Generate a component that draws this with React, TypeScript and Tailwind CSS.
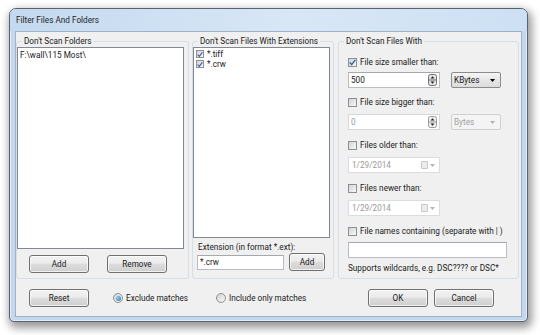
import type { ReactNode } from "react";

const Btn = ({ label, w }: { label: string; w: string }) => (
  <div
    className={`${w} h-[18px] flex items-center justify-center rounded-[3px] border border-[#707070] bg-[linear-gradient(#f2f2f2,#ebebeb_45%,#dddddd_50%,#cfcfcf)] shadow-[inset_0_0_0_1px_rgba(255,255,255,0.7)]`}
  >
    {label}
  </div>
);

const Check = ({ checked, size }: { checked?: boolean; size: string }) => (
  <span
    className={`${size} shrink-0 flex items-center justify-center border border-[#8e8f8f] bg-[linear-gradient(135deg,#d2d4d8,#f7f7f7)]`}
  >
    {checked && (
      <svg width="7" height="7" viewBox="0 0 7 7">
        <path d="M0.8 3.6 L2.7 5.6 L6.3 0.9" fill="none" stroke="#3c5fa8" strokeWidth="1.4" />
      </svg>
    )}
  </span>
);

const Radio = ({ on }: { on?: boolean }) => (
  <span className="w-[10px] h-[10px] shrink-0 rounded-full border border-[#8e8f8f] bg-[linear-gradient(135deg,#d0d2d6,#f8f8f8)] flex items-center justify-center">
    {on && (
      <span className="w-[5px] h-[5px] rounded-full bg-[radial-gradient(circle_at_35%_35%,#8fd0f5,#1f6bb0)]" />
    )}
  </span>
);

const Spin = ({ dim }: { dim?: boolean }) => (
  <svg width="9" height="12" viewBox="0 0 9 12" className="mr-[2px]">
    <rect x="0.5" y="0.5" width="8" height="11" rx="2" fill={dim ? "#f0f0f0" : "#e6e6e6"} stroke={dim ? "#9a9a9a" : "#6f6f6f"} />
    <line x1="1" y1="6" x2="8" y2="6" stroke={dim ? "#9a9a9a" : "#6f6f6f"} />
    <path d="M2.5 4.5 L4.5 2.3 L6.5 4.5 Z" fill="#202020" />
    <path d="M2.5 7.5 L4.5 9.7 L6.5 7.5 Z" fill="#202020" />
  </svg>
);

const Row = ({ children, mt }: { children: ReactNode; mt: string }) => (
  <div className={`${mt} h-[10px] flex items-center gap-[3px]`}>{children}</div>
);

const DateBox = ({ mt }: { mt: string }) => (
  <div className={`${mt} w-[92px] h-[16px] flex items-center justify-between border border-[#d9dde2] bg-white pl-[3px] pr-[4px] text-[#9a9a9a]`}>
    <span>1/29/2014</span>
    <span className="flex items-center gap-[2px]">
      <span className="w-[7px] h-[8px] rounded-[1px] border border-[#c8c8c8] bg-[#ececec]" />
      <svg width="5" height="3" viewBox="0 0 5 3">
        <path d="M0 0 L5 0 L2.5 3 Z" fill="#b5b5b5" />
      </svg>
    </span>
  </div>
);

const Group = ({ title, w, children }: { title: string; w: string; children: ReactNode }) => (
  <fieldset className={`${w} h-[243px] shrink-0 rounded-[3px] border border-[#d5dfe5]`}>
    <legend className="ml-[5px] px-[2px] h-[10px] leading-[10px]">{title}</legend>
    {children}
  </fieldset>
);

export default function App() {
  return (
    <div className="w-[540px] h-[335px] bg-white overflow-hidden pt-[8px] pl-[9px] font-['Roboto',Arial,sans-serif] text-[8.2px] leading-[10px] text-[#1a1a1a]">
      <div className="w-[519px] h-[314px] flex flex-col rounded-t-[7px] rounded-b-[5px] border border-[#58636f] bg-[#c3d8ee] shadow-[inset_0_0_0_1px_rgba(255,255,255,0.55),2px_4px_9px_2px_rgba(0,0,0,0.4)]">
        <div className="h-[22px] shrink-0 flex items-center pl-[6px] rounded-t-[6px] bg-[linear-gradient(90deg,#c4d9ef,#d8e7f6_55%,#cde0f3)] text-[#1e1e1e]">
          Filter Files And Folders
        </div>
        <div className="mx-[5px] h-[286px] border border-[#9fb3c8] bg-[#f0f0f0] flex flex-col">
          <div className="mt-[4px] flex">
            <Group title="Don't Scan Folders" w="w-[173px]">
              <div className="mt-[1px] w-[167px] h-[202px] border border-[#828790] bg-white pt-[2px] pl-[2px]">
                F:\wall\115 Most\
              </div>
              <div className="mt-[6px] flex pl-[12px] gap-[18px]">
                <Btn label="Add" w="w-[60px]" />
                <Btn label="Remove" w="w-[60px]" />
              </div>
            </Group>
            <div className="w-[3px] shrink-0" />
            <Group title="Don't Scan Files With Extensions" w="w-[142px]">
              <div className="mt-[1px] w-[137px] h-[191px] border border-[#828790] bg-white pt-[1px] pl-[2px]">
                {["*.tiff", "*.crw"].map((e) => (
                  <div key={e} className="h-[10px] flex items-center gap-[3px]">
                    <Check checked size="w-[8px] h-[8px]" />
                    <span>{e}</span>
                  </div>
                ))}
              </div>
              <div className="mt-[4px] pl-[5px] h-[10px]">Extension (in format *.ext):</div>
              <div className="mt-[1px] flex items-center pl-[4px] gap-[5px]">
                <div className="w-[87px] h-[15px] flex items-center border border-[#b8bdc3] border-t-[#a5a9af] bg-white pl-[2px]">
                  *.crw
                </div>
                <Btn label="Add" w="w-[36px]" />
              </div>
            </Group>
            <div className="w-[4px] shrink-0" />
            <Group title="Don't Scan Files With" w="w-[181px]">
              <div className="pl-[9px] flex flex-col">
                <Row mt="mt-[11px]">
                  <Check checked size="w-[9px] h-[9px]" />
                  <span>File size smaller than:</span>
                </Row>
                <div className="mt-[5px] h-[16px] flex items-center gap-[11px]">
                  <div className="w-[92px] h-[16px] flex items-center justify-between border border-[#b8bdc3] border-t-[#a5a9af] bg-white pl-[2px]">
                    <span>500</span>
                    <Spin />
                  </div>
                  <div className="w-[50px] h-[16px] flex items-center justify-between rounded-[2px] border border-[#8b8b8b] bg-[linear-gradient(#f6f6f6,#e6e6e6_50%,#dcdcdc)] pl-[2px] pr-[5px]">
                    <span>KBytes</span>
                    <svg width="5" height="3" viewBox="0 0 5 3">
                      <path d="M0 0 L5 0 L2.5 3 Z" fill="#000" />
                    </svg>
                  </div>
                </div>
                <Row mt="mt-[9px]">
                  <Check size="w-[9px] h-[9px]" />
                  <span>File size bigger than:</span>
                </Row>
                <div className="mt-[7px] h-[16px] flex items-center gap-[11px]">
                  <div className="w-[92px] h-[16px] flex items-center justify-between border border-[#d3d8dd] bg-white pl-[2px] text-[#9a9a9a]">
                    <span>0</span>
                    <Spin dim />
                  </div>
                  <div className="w-[50px] h-[16px] flex items-center justify-between rounded-[2px] border border-[#d0d0d0] bg-[#f4f4f4] pl-[2px] pr-[5px] text-[#a0a0a0]">
                    <span>Bytes</span>
                    <svg width="5" height="3" viewBox="0 0 5 3">
                      <path d="M0 0 L5 0 L2.5 3 Z" fill="#b0b0b0" />
                    </svg>
                  </div>
                </div>
                <Row mt="mt-[10px]">
                  <Check size="w-[9px] h-[9px]" />
                  <span>Files older than:</span>
                </Row>
                <DateBox mt="mt-[7px]" />
                <Row mt="mt-[10px]">
                  <Check size="w-[9px] h-[9px]" />
                  <span>Files newer than:</span>
                </Row>
                <DateBox mt="mt-[7px]" />
                <Row mt="mt-[10px]">
                  <Check size="w-[9px] h-[9px]" />
                  <span>File names containing (separate with | )</span>
                </Row>
                <div className="mt-[6px] w-[159px] h-[16px] border border-[#b8bdc3] border-t-[#a5a9af] bg-white" />
                <div className="mt-[5px] h-[10px]">Supports wildcards, e.g. DSC???? or DSC*</div>
              </div>
            </Group>
          </div>
          <div className="mt-[10px] flex items-center pl-[13px] pr-[27px]">
            <Btn label="Reset" w="w-[60px]" />
            <div className="ml-[24px] w-[103px] flex items-center gap-[3px]">
              <Radio on />
              <span>Exclude matches</span>
            </div>
            <div className="flex items-center gap-[3px]">
              <Radio />
              <span>Include only matches</span>
            </div>
            <div className="ml-auto flex gap-[6px]">
              <Btn label="OK" w="w-[60px]" />
              <Btn label="Cancel" w="w-[60px]" />
            </div>
          </div>
        </div>
      </div>
    </div>
  );
}
